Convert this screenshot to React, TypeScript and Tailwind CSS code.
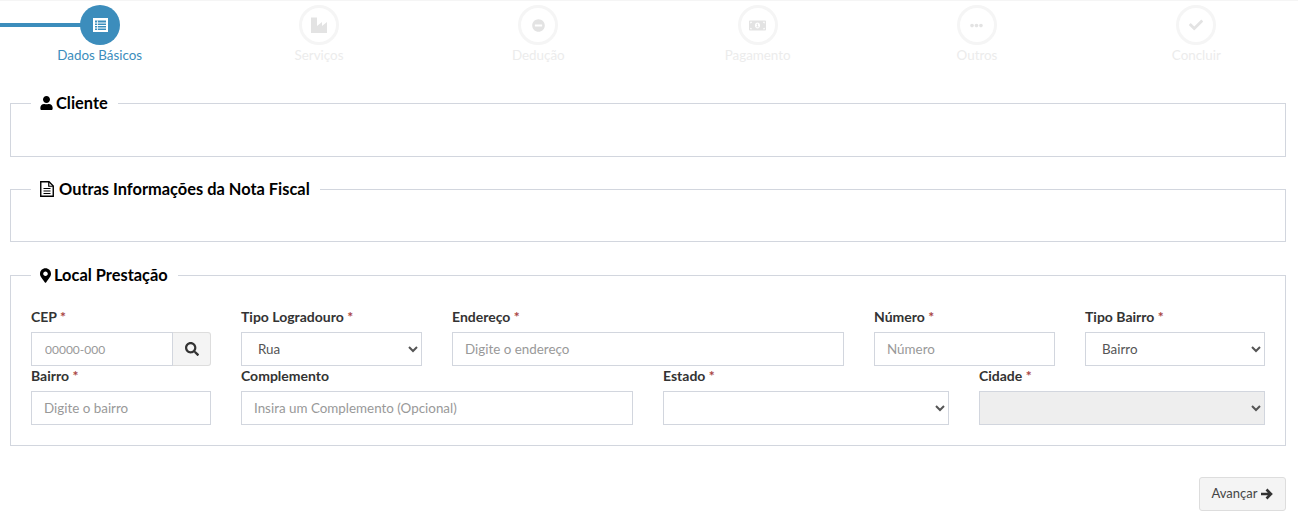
import React from "react";
import { FaMinusCircle, FaMoneyBillAlt, FaEllipsisH, FaCheck, FaUser, FaMapMarkerAlt, FaSearch } from "react-icons/fa";

function ListAltIcon({ className }: { className?: string }) {
  return (
    <svg viewBox="0 0 15 14" width="15" height="14" className={className} fill="none">
      <rect x="0" y="0" width="15" height="14" fill="#fff" />
      <rect x="2" y="2.5" width="11" height="9.5" fill="#3c8dbc" />
      <path d="M2 5h11M2 7.5h11M2 10h11" stroke="#fff" strokeWidth="1" />
      <path d="M4.5 2.5v9.5" stroke="#fff" strokeWidth="0.8" />
    </svg>
  );
}

function IndustryIcon({ className }: { className?: string }) {
  return (
    <svg viewBox="0 0 16 16" width="16" height="16" className={className} fill="currentColor">
      <path d="M0 16V0.5h6v8.5l5-4v4l5-4v11z" />
    </svg>
  );
}

function FileTextIcon({ className }: { className?: string }) {
  return (
    <svg viewBox="0 0 14 16" width="14" height="16" className={className} fill="none" stroke="currentColor">
      <path d="M1 .75h8L13.25 5v10.25H.75V.75z" strokeWidth="1.4" />
      <path d="M8.75 1v4.25H13" strokeWidth="1.2" />
      <path d="M3.5 7.5h7M3.5 10h7M3.5 12.5h7" strokeWidth="1.2" />
    </svg>
  );
}

function ArrowIcon() {
  return (
    <svg viewBox="0 0 12 12" width="12" height="12" fill="none" stroke="#333" strokeWidth="2.6">
      <path d="M0 6h9.5M5.5 1.5L10 6l-4.5 4.5" />
    </svg>
  );
}

const steps = [
  { label: "Dados Básicos", Icon: ListAltIcon, active: true, size: "ml-[1px]" },
  { label: "Serviços", Icon: IndustryIcon, active: false, size: "" },
  { label: "Dedução", Icon: FaMinusCircle, active: false, size: "text-[13px]" },
  { label: "Pagamento", Icon: FaMoneyBillAlt, active: false, size: "text-[17px]" },
  { label: "Outros", Icon: FaEllipsisH, active: false, size: "text-[13px]" },
  { label: "Concluir", Icon: FaCheck, active: false, size: "text-[14px]" },
];

function Step({ label, Icon, active, size }: (typeof steps)[number]) {
  return (
    <div className="flex flex-col items-center">
      <div className={active ? "z-10 flex h-10 w-10 items-center justify-center rounded-full bg-[#3c8dbc] text-white" : "z-10 flex h-10 w-10 items-center justify-center rounded-full border-[3px] border-[#f5f5f5] bg-white text-[#e3e3e3]"}>
        <Icon className={size} />
      </div>
      <span className={active ? "text-[13.4px] leading-5 text-[#3c8dbc]" : "text-[13.4px] leading-5 text-[#ececec]"}>{label}</span>
    </div>
  );
}

function Label({ text, required = true }: { text: string; required?: boolean }) {
  return (
    <label className="mb-[5px] block text-[14px] font-bold leading-5 text-[#333]">
      {text}
      {required && <span className="text-[#a94442]"> *</span>}
    </label>
  );
}

const inputClass = "block h-[34px] w-full border border-[#d2d6de] bg-white px-3 text-[13.4px] text-[#555] outline-none placeholder:text-[#999]";
const selectBase = "block h-[34px] w-full border border-[#d2d6de] px-3 text-[13.4px] text-[#555] outline-none";

function Field({ label, required, placeholder }: { label: string; required?: boolean; placeholder: string }) {
  return (
    <div>
      <Label text={label} required={required} />
      <input className={inputClass} placeholder={placeholder} />
    </div>
  );
}

function SelectField({ label, value, disabled }: { label: string; value?: string; disabled?: boolean }) {
  return (
    <div>
      <Label text={label} />
      <select disabled={disabled} className={disabled ? selectBase + " bg-[#eee] opacity-100" : selectBase + " bg-white"} defaultValue={value ?? ""}>
        <option value={value ?? ""}>{value ?? ""}</option>
      </select>
    </div>
  );
}

function Section({ title, icon, className, children }: { title: string; icon: React.ReactNode; className: string; children?: React.ReactNode }) {
  return (
    <fieldset className={"border border-[#d2d6de] px-5 " + className}>
      <legend className="flex items-center gap-[3px] pl-[9px] pr-[10px] text-[16.4px] font-bold leading-[24px] text-black">
        {icon}
        {title}
      </legend>
      {children}
    </fieldset>
  );
}

export default function App() {
  return (
    <div className="h-[523px] overflow-hidden border-t border-[#f5f5f5] bg-white font-['Lato','Liberation_Sans',sans-serif]">
      <div className="relative ml-[-10px] mr-[-8px] grid grid-cols-6 pt-1">
        <div className="absolute left-[10px] top-[22px] h-1 w-[100px] bg-[#3c8dbc]" />
        {steps.map((s) => (
          <Step key={s.label} {...s} />
        ))}
      </div>
      <div className="mt-[26px] flex flex-col gap-[20px] pl-[10px] pr-[12px]">
        <Section title="Cliente" icon={<FaUser className="h-[14px] w-[13px]" />} className="h-[66px]" />
        <Section title="Outras Informações da Nota Fiscal" icon={<FileTextIcon className="mr-[2px]" />} className="h-[65px]" />
        <Section title="Local Prestação" icon={<FaMapMarkerAlt className="h-[15px] w-[11px]" />} className="mt-[1px] h-[183px]">
          <div className="grid grid-cols-[180px_181px_392px_181px_180px] gap-x-[30px] pt-[20px]">
            <div>
              <Label text="CEP" />
              <div className="flex h-[34px]">
                <input className="h-[34px] w-[142px] border border-[#d2d6de] px-[13px] text-[12px] text-[#555] outline-none placeholder:text-[#999]" placeholder="00000-000" />
                <button className="flex flex-1 items-center justify-center rounded-r-[3px] border border-l-0 border-[#ddd] bg-[#f4f4f4] text-[14px] text-[#333]">
                  <FaSearch />
                </button>
              </div>
            </div>
            <SelectField label="Tipo Logradouro" value="Rua" />
            <Field label="Endereço" placeholder="Digite o endereço" />
            <Field label="Número" placeholder="Número" />
            <SelectField label="Tipo Bairro" value="Bairro" />
          </div>
          <div className="grid grid-cols-[180px_392px_286px_286px] gap-x-[30px]">
            <Field label="Bairro" placeholder="Digite o bairro" />
            <Field label="Complemento" required={false} placeholder="Insira um Complemento (Opcional)" />
            <SelectField label="Estado" />
            <SelectField label="Cidade" disabled />
          </div>
        </Section>
      </div>
      <div className="mt-[31px] flex justify-end pr-[12px]">
        <button className="flex h-[34px] w-[87px] items-center justify-center gap-[4px] rounded-[3px] border border-[#ddd] bg-[#f4f4f4] text-[13px] text-[#444]">
          Avançar <ArrowIcon />
        </button>
      </div>
    </div>
  );
}
